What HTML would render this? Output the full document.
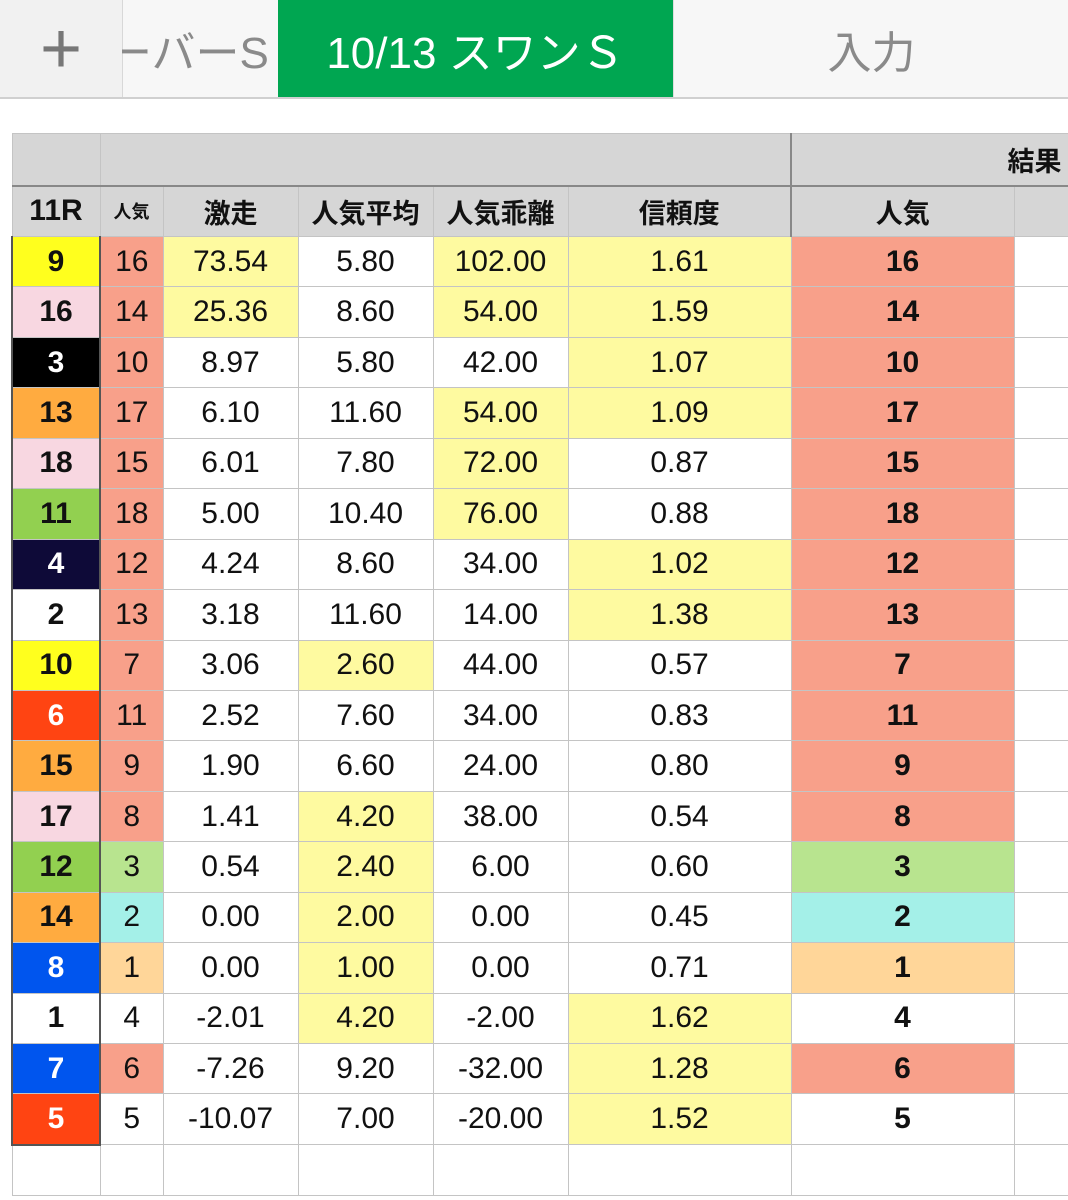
<!DOCTYPE html>
<html><head><meta charset="utf-8"><style>
body{margin:0;width:1068px;height:1200px;overflow:hidden;background:#fff;font-family:"Liberation Sans","Noto Sans CJK JP",sans-serif;position:relative}
.tabs{position:absolute;left:0;top:0;width:1068px;height:97px;border-bottom:2px solid #d0d0d0;background:#f7f7f7}
.t{position:absolute;top:0;height:97px;display:flex;align-items:center;justify-content:center;font-size:44px;color:#8a8a8a}
table{position:absolute;left:11px;top:133px;border-collapse:collapse;table-layout:fixed;width:1080px}
td{border:1.5px solid #c4c4c4;text-align:center;font-size:30px;color:#111;padding:0;white-space:nowrap;overflow:hidden;font-weight:300}
tr.h td{background:#d6d6d6;font-weight:bold;font-size:27px}
tr.d td{height:49.44px}
td.g{font-weight:bold;border-left:2px solid #555;border-right:2px solid #555}
td.r{font-weight:bold}
.y{background:#fefaa0}.s{background:#f8a08a}.lg{background:#b8e48f}.cy{background:#a4f0e8}.pc{background:#ffd699}
.Y{background:#ffff1e}.P{background:#f8d7e1}.K{background:#000;color:#fff!important}.O{background:#ffab40}.G{background:#92d050}.N{background:#0e0a38;color:#fff!important}.W{background:#fff}.R{background:#ff4412;color:#fff!important}.B{background:#0055ee;color:#fff!important}
</style></head><body>
<div class="tabs">
<div class="t" style="left:0;width:122px;background:#f1f1f1;border-right:1px solid #d8d8d8;font-size:72px;color:#777;font-weight:300">+</div>
<div class="t" style="left:122px;width:156px;justify-content:flex-start;overflow:hidden"><span style="margin-left:-14px">ーバーS</span></div>
<div class="t" style="left:278px;width:395px;background:#00a651;color:#fff">10/13 スワンＳ</div>
<div class="t" style="left:673px;width:395px;border-left:1px solid #ddd">入力</div>
</div>
<table>
<colgroup><col style="width:88px"><col style="width:63px"><col style="width:135px"><col style="width:135px"><col style="width:135px"><col style="width:223px"><col style="width:223px"><col style="width:78px"></colgroup>
<tr class="h" style="height:52px"><td style="border-bottom:2px solid #888"></td><td colspan="5" style="border-bottom:2px solid #888;border-right:2px solid #888"></td><td colspan="2" style="text-align:right;padding-right:30px;border-bottom:2px solid #888">結果</td></tr>
<tr class="h" style="height:51px"><td style="font-size:30px">11R</td><td style="font-size:18px">人気</td><td>激走</td><td>人気平均</td><td>人気乖離</td><td style="border-right:2px solid #888">信頼度</td><td>人気</td><td></td></tr>
<tr class="d"><td class="g Y">9</td><td class="s">16</td><td class="y">73.54</td><td>5.80</td><td class="y">102.00</td><td class="y">1.61</td><td class="r s">16</td><td></td></tr>
<tr class="d"><td class="g P">16</td><td class="s">14</td><td class="y">25.36</td><td>8.60</td><td class="y">54.00</td><td class="y">1.59</td><td class="r s">14</td><td></td></tr>
<tr class="d"><td class="g K">3</td><td class="s">10</td><td>8.97</td><td>5.80</td><td>42.00</td><td class="y">1.07</td><td class="r s">10</td><td></td></tr>
<tr class="d"><td class="g O">13</td><td class="s">17</td><td>6.10</td><td>11.60</td><td class="y">54.00</td><td class="y">1.09</td><td class="r s">17</td><td></td></tr>
<tr class="d"><td class="g P">18</td><td class="s">15</td><td>6.01</td><td>7.80</td><td class="y">72.00</td><td>0.87</td><td class="r s">15</td><td></td></tr>
<tr class="d"><td class="g G">11</td><td class="s">18</td><td>5.00</td><td>10.40</td><td class="y">76.00</td><td>0.88</td><td class="r s">18</td><td></td></tr>
<tr class="d"><td class="g N">4</td><td class="s">12</td><td>4.24</td><td>8.60</td><td>34.00</td><td class="y">1.02</td><td class="r s">12</td><td></td></tr>
<tr class="d"><td class="g W">2</td><td class="s">13</td><td>3.18</td><td>11.60</td><td>14.00</td><td class="y">1.38</td><td class="r s">13</td><td></td></tr>
<tr class="d"><td class="g Y">10</td><td class="s">7</td><td>3.06</td><td class="y">2.60</td><td>44.00</td><td>0.57</td><td class="r s">7</td><td></td></tr>
<tr class="d"><td class="g R">6</td><td class="s">11</td><td>2.52</td><td>7.60</td><td>34.00</td><td>0.83</td><td class="r s">11</td><td></td></tr>
<tr class="d"><td class="g O">15</td><td class="s">9</td><td>1.90</td><td>6.60</td><td>24.00</td><td>0.80</td><td class="r s">9</td><td></td></tr>
<tr class="d"><td class="g P">17</td><td class="s">8</td><td>1.41</td><td class="y">4.20</td><td>38.00</td><td>0.54</td><td class="r s">8</td><td></td></tr>
<tr class="d"><td class="g G">12</td><td class="lg">3</td><td>0.54</td><td class="y">2.40</td><td>6.00</td><td>0.60</td><td class="r lg">3</td><td></td></tr>
<tr class="d"><td class="g O">14</td><td class="cy">2</td><td>0.00</td><td class="y">2.00</td><td>0.00</td><td>0.45</td><td class="r cy">2</td><td></td></tr>
<tr class="d"><td class="g B">8</td><td class="pc">1</td><td>0.00</td><td class="y">1.00</td><td>0.00</td><td>0.71</td><td class="r pc">1</td><td></td></tr>
<tr class="d"><td class="g W">1</td><td>4</td><td>-2.01</td><td class="y">4.20</td><td>-2.00</td><td class="y">1.62</td><td class="r">4</td><td></td></tr>
<tr class="d"><td class="g B">7</td><td class="s">6</td><td>-7.26</td><td>9.20</td><td>-32.00</td><td class="y">1.28</td><td class="r s">6</td><td></td></tr>
<tr class="d"><td class="g R" style="border-bottom:2px solid #555">5</td><td>5</td><td>-10.07</td><td>7.00</td><td>-20.00</td><td class="y">1.52</td><td class="r">5</td><td></td></tr>
<tr class="d"><td></td><td></td><td></td><td></td><td></td><td></td><td></td><td></td></tr>
</table>
</body></html>
